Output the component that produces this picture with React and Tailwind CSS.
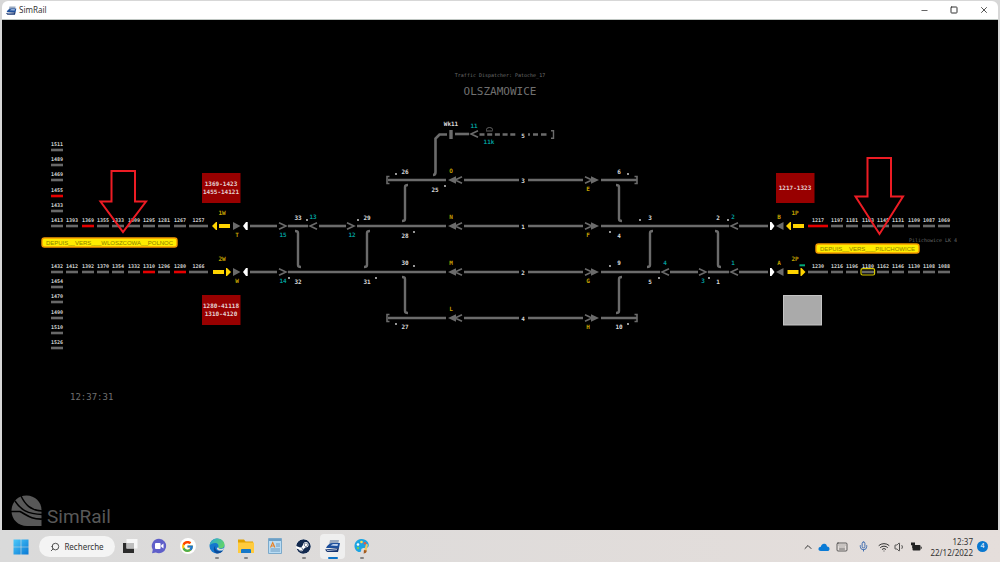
import { FcGoogle } from 'react-icons/fc'
import { FaSteam } from 'react-icons/fa'
import { ChevronUp, Keyboard, Mic, Minus, Search, Square, Volume1, Wifi, X } from 'lucide-react'

const ROWS = { side3: 180, main1: 226, main2: 272, side4: 318 }

// block sections leading out of the station: [label, x, y, width, occupied]
const BLOCKS = [
  ['1511', 51, 150], ['1489', 51, 165], ['1469', 51, 180], ['1455', 51, 196, 12, true], ['1433', 51, 211],
  ['1413', 51, 226], ['1393', 66, 226], ['1369', 82, 226, 12, true], ['1355', 97, 226], ['1333', 112, 226],
  ['1309', 128, 226], ['1295', 143, 226], ['1281', 158, 226], ['1267', 174, 226], ['1257', 189, 226, 19],
  ['1432', 51, 272], ['1412', 66, 272], ['1392', 82, 272], ['1370', 97, 272], ['1354', 112, 272],
  ['1332', 128, 272], ['1310', 143, 272, 12, true], ['1296', 158, 272], ['1280', 174, 272, 12, true], ['1266', 189, 272, 19],
  ['1454', 51, 287], ['1470', 51, 302], ['1490', 51, 318], ['1510', 51, 333], ['1526', 51, 348],
  ['1217', 808, 226, 20, true], ['1197', 831, 226], ['1181', 846, 226], ['1163', 862, 226], ['1145', 877, 226],
  ['1131', 892, 226], ['1109', 908, 226], ['1087', 923, 226], ['1069', 938, 226],
  ['1230', 808, 272, 20], ['1216', 831, 272], ['1196', 846, 272], ['1180', 862, 272], ['1162', 877, 272],
  ['1146', 892, 272], ['1130', 908, 272], ['1108', 923, 272], ['1088', 938, 272],
]

// [x1, x2, y]
const TRACKS = [
  [388, 446, 180], [464, 519, 180], [528, 583, 180], [601, 637, 180],
  [250, 277, 226], [288, 308, 226], [319, 346, 226], [357, 446, 226], [464, 519, 226], [528, 583, 226], [601, 729, 226], [739, 768, 226],
  [250, 277, 272], [288, 446, 272], [464, 519, 272], [528, 583, 272], [601, 660, 272], [670, 698, 272], [708, 729, 272], [739, 768, 272],
  [388, 446, 318], [464, 519, 318], [528, 583, 318], [601, 637, 318],
  [455, 469, 134],
]

// crossovers: [x, top, bottom, side of the top foot]
const CROSSOVERS = [
  [298, 231, 267, -1], [367, 231, 267, 1], [405, 185, 221, 1], [405, 277, 313, -1],
  [619, 185, 221, -1], [619, 277, 313, 1], [650, 231, 267, 1], [718, 231, 267, -1],
]

const POINTS = [
  ['26', 405, 174], ['25', 435, 192], ['33', 298, 220], ['29', 367, 220], ['28', 405, 238], ['30', 405, 265],
  ['32', 298, 284], ['31', 367, 284], ['27', 405, 329], ['6', 619, 174], ['3', 650, 220], ['2', 718, 220],
  ['4', 619, 238], ['9', 619, 265], ['5', 650, 284], ['1', 718, 284], ['10', 619, 329], ['Wk11', 451, 126],
  ['3', 523, 183], ['1', 523, 229], ['2', 523, 275], ['4', 523, 321], ['5', 523, 138],
]

const SHUNT = [
  ['11', 474, 128], ['11k', 489, 144], ['13', 313, 219], ['15', 283, 237], ['12', 352, 237], ['14', 283, 283],
  ['2', 733, 219], ['4', 665, 265], ['1', 733, 265], ['3', 703, 283],
]

const SIGNALS = [
  ['1W', 222, 215], ['T', 237, 237], ['2W', 222, 261], ['W', 237, 283], ['O', 451, 173], ['N', 451, 219],
  ['M', 451, 265], ['L', 451, 311], ['E', 588, 191], ['F', 588, 237], ['G', 588, 283], ['H', 588, 329],
  ['B', 779, 219], ['1P', 795, 215], ['A', 779, 265], ['2P', 795, 261],
]

const DOTS = [
  [396, 174], [445, 186], [307, 220], [358, 220], [414, 232], [414, 266], [289, 278], [376, 278], [396, 324],
  [628, 174], [640, 220], [728, 220], [610, 232], [610, 266], [659, 278], [709, 278], [628, 324],
]

const CHEVRONS = [
  ['>', 279, 226], ['<', 310, 226], ['>', 347, 226], ['>', 279, 272], ['<', 731, 226], ['<', 662, 272],
  ['>', 699, 272], ['<', 731, 272], ['<', 471, 134],
]

function Label({ x, y, className, children }) {
  return <text x={x} y={y} textAnchor="middle" className={className}>{children}</text>
}

function Chevron({ dir, x, y }) {
  const d = dir === '>' ? `M${x} ${y - 3.3}L${x + 7} ${y}L${x} ${y + 3.3}` : `M${x + 7} ${y - 3.3}L${x} ${y}L${x + 7} ${y + 3.3}`
  return <path d={d} fill="none" stroke="#6b6b6b" strokeWidth="1.6" />
}

function TrainBox({ x, y, lines }) {
  const first = lines.length === 2 ? y + 13 : y + 17
  return (
    <g>
      <rect x={x} y={y} width="38.5" height="30" fill="#980000" />
      {lines.map((line, i) => (
        <Label key={line} x={x + 19} y={first + i * 8} className="fill-[#e4d2d2] text-[6px]">{line}</Label>
      ))}
    </g>
  )
}

function Plate({ x, y, width, children }) {
  return (
    <g>
      <rect x={x} y={y} width={width} height="9" rx="2.5" fill="#ffec00" stroke="#f59a00" strokeWidth="1.4" />
      <Label x={x + width / 2} y={y + 7} className="fill-[#8c8200] font-['Liberation_Sans',sans-serif] text-[6px] font-normal">{children}</Label>
    </g>
  )
}

function LineArrow({ x, y, dir }) {
  return dir === 'left' ? (
    <path d={`M${x} ${y}l4 -4h1v8h-1zM${x + 7} ${y - 2}h11v4h-11z`} fill="#ffd400" />
  ) : (
    <path d={`M${x} ${y - 2}h11v4h-11zM${x + 13} ${y - 4}h1l4 4l-4 4h-1z`} fill="#ffd400" />
  )
}

function Board() {
  return (
    <svg
      viewBox="2 20 996 510"
      role="img"
      aria-label="Olszamowice"
      className="absolute inset-0 h-full w-full font-['DejaVu_Sans_Mono',monospace] font-bold"
    >
      {BLOCKS.map(([label, x, y, width = 12, busy]) => (
        <g key={label}>
          <rect x={x} y={y - 1.3} width={width} height="2.6" fill={busy ? '#e60000' : '#686868'} />
          <Label x={x + width / 2} y={y - 4} className="fill-[#d0d0d0] text-[5px]">{label}</Label>
        </g>
      ))}

      <g stroke="#6b6b6b" strokeWidth="2.6" fill="none">
        {TRACKS.map(([x1, x2, y]) => <path key={`${x1}-${y}`} d={`M${x1} ${y}H${x2}`} />)}
        {CROSSOVERS.map(([x, top, bottom, side]) => (
          <path key={`${x}-${top}`} d={`M${x + side * 3} ${top}q${-side * 3} 0 ${-side * 3} 2V${bottom - 2}q0 2 ${-side * 3} 2`} strokeWidth="2.4" />
        ))}
        <path d="M433 175q2.5 0 2.5 -3V138.500l4 -4H447" />
        <path d="M451 130V139" strokeWidth="3.4" />
        <path d="M479.500 134.500H518" strokeDasharray="5 2.7" />
        <path d="M528 134.500h2M533 134.500h5M541 134.500h5.500" />
        <path d="M551 130.700h2.500v7.500H551" strokeWidth="1.4" />
        <path d="M486 131h6.500M486.500 130.500v-1q0 -2 3 -2t3 2v1" strokeWidth="0.9" />
        {[ROWS.side3, ROWS.side4].map(y => (
          <path key={y} d={`M389.500 ${y - 3.5}h-2.500v7h2.500M634.500 ${y - 3.5}h2.500v7h-2.500`} strokeWidth="1.6" />
        ))}
      </g>

      {CHEVRONS.map(([dir, x, y]) => <Chevron key={`${x}-${y}`} dir={dir} x={x} y={y} />)}
      {Object.values(ROWS).map(y => (
        <g key={y}>
          <path d={`M448 ${y}l8 -3.700v7.400zM599 ${y}l-8 -3.700v7.400z`} fill="#6b6b6b" />
          <Chevron dir="<" x={455} y={y} />
          <Chevron dir=">" x={585} y={y} />
        </g>
      ))}
      {[ROWS.main1, ROWS.main2].map(y => (
        <g key={y}>
          <path d={`M240.500 ${y}l-7.500 -4v8zM776 ${y}l7.500 -4v8z`} fill="#6b6b6b" />
          <path d={`M243 ${y}l3 -4h1.700v8h-1.700zM774.500 ${y}l-3 -4h-1.500v8h1.500z`} fill="#fff" />
        </g>
      ))}

      <LineArrow x={212} y={226} dir="left" />
      <LineArrow x={213} y={272} dir="right" />
      <LineArrow x={786} y={226} dir="left" />
      <LineArrow x={787.5} y={272} dir="right" />
      <rect x="799.500" y="264.300" width="5.500" height="2" fill="#00a878" />
      <rect x="861" y="268.600" width="13.600" height="6.400" rx="1.500" fill="none" stroke="#d5c800" strokeWidth="1.200" />

      {DOTS.map(([x, y]) => <circle key={`${x}-${y}`} cx={x} cy={y} r="0.9" fill="#ddd" />)}
      {POINTS.map(([t, x, y]) => <Label key={`${x}-${y}`} x={x} y={y} className="fill-[#dadada] text-[6px]">{t}</Label>)}
      {SHUNT.map(([t, x, y]) => <Label key={`${x}-${y}`} x={x} y={y} className="fill-[#009c9c] text-[6px]">{t}</Label>)}
      {SIGNALS.map(([t, x, y]) => <Label key={`${x}-${y}`} x={x} y={y} className="fill-[#c4a000] text-[6px]">{t}</Label>)}

      <TrainBox x={202} y={173} lines={['1369-1423', '1455-14121']} />
      <TrainBox x={202} y={295} lines={['1280-41118', '1310-4120']} />
      <TrainBox x={776} y={173} lines={['1217-1323']} />
      <rect x="783.500" y="295.500" width="38" height="29.500" fill="#aaa" stroke="#c4c4c4" />

      <Label x={933} y={242} className="fill-[#6a6a6a] text-[5px] font-normal">Pilichowice LK 4</Label>
      <Plate x={42} y={238} width={135}>DEPUIS__VERS___WLOSZCOWA__POLNOC</Plate>
      <Plate x={816} y={244} width={103}>DEPUIS__VERS___PILICHOWICE</Plate>

      <g fill="none" stroke="#ed1c24" strokeWidth="2">
        <path d="M111.500 171H135V201.500H146L123 232L100.500 201.500H111.500Z" />
        <path d="M867.500 158H891V196.500H903L879.500 234L855.500 196.500H867.500Z" />
      </g>
    </svg>
  )
}

function TrainIcon({ className }) {
  return (
    <svg viewBox="0 0 16 16" className={className}>
      <path d="M5 2h9l-1 5H4z" fill="#9aa9bf" />
      <path d="M1 10c1-3 4-5 7-5h7l-1 5z" fill="#1d4f9c" />
      <path d="M5.500 7.500L8 6h5l-.5 2z" fill="#bcd0ee" />
      <path d="M0 11.500l14-1.500-1 4H2z" fill="#16336e" />
      <path d="M2 12.600l10-1" stroke="#d6e2f5" strokeWidth=".8" />
    </svg>
  )
}

function WindowsIcon() {
  return (
    <svg viewBox="0 0 16 16" className="size-4">
      <defs>
        <linearGradient id="win" x1="0" y1="0" x2="1" y2="1">
          <stop offset="0" stopColor="#4cc9fa" /><stop offset="1" stopColor="#0878d4" />
        </linearGradient>
      </defs>
      <path d="M.5.5h7.200v7.200H.5zM8.300.5h7.200v7.200H8.300zM.5 8.300h7.200v7.200H.5zM8.300 8.300h7.200v7.200H8.300z" fill="url(#win)" />
    </svg>
  )
}

function TaskViewIcon() {
  return (
    <svg viewBox="0 0 16 16" className="size-4">
      <path d="M1 5h11v10H1z" fill="#2b2b2b" />
      <path d="M4.500 1H15.500v9.500H4.500z" fill="#f7f7f7" />
      <path d="M4.500 5H12v5.500H4.500z" fill="#bdbdbd" />
    </svg>
  )
}

function ChatIcon() {
  return (
    <svg viewBox="0 0 16 16" className="size-4">
      <path d="M8 .8a7.200 7.200 0 1 1-3.200 13.700L1 15.300l.8-3.600A7.200 7.200 0 0 1 8 .8z" fill="#5f5fc9" />
      <rect x="4" y="5" width="5.600" height="6" rx="1" fill="#fff" />
      <path d="M10.200 7.300L12.500 5.600v4.800l-2.300-1.700z" fill="#fff" />
    </svg>
  )
}

function EdgeIcon() {
  return (
    <svg viewBox="0 0 16 16" className="size-4">
      <defs>
        <linearGradient id="edgeTop" x1="0" y1="0" x2="1" y2=".5">
          <stop offset="0" stopColor="#2aa7dd" /><stop offset="1" stopColor="#5fd36b" />
        </linearGradient>
      </defs>
      <circle cx="8" cy="8" r="7.500" fill="#1478cf" />
      <path d="M.6 7.500C1 3.500 4.200.5 8 .5c4.500 0 7.500 3 7.500 6.300 0 2.400-1.800 3.700-3.900 3.700-1.700 0-2.500-.6-2.300-1.200.8-2.500-.8-4.300-3.100-4.300C3.500 5 1.500 6 .6 7.500z" fill="url(#edgeTop)" />
      <path d="M6.500 7.500c-1.300 2.500.5 5.700 4 5.700 1.500 0 2.600-.4 3.600-1C12.800 14.500 10.500 15.500 8 15.500c-3.300-.8-4.300-5.500-1.500-8z" fill="#0c4a99" />
      <path d="M9.500 9.200c-.6.700.4 1.700 2.500 1.700 1.400 0 2.500-.6 3-1.300l-.5 2.100c-2.500 1.700-6.500 1-6.700-1.700z" fill="#e1dfde" />
    </svg>
  )
}

function FolderIcon() {
  return (
    <svg viewBox="0 0 16 16" className="size-4">
      <path d="M0 1.500h6l1.500 2H15v4H0z" fill="#e0a100" />
      <path d="M0 4.500h16v10.500H0z" fill="#ffcb3d" />
      <path d="M3 15v-3q0-1 1-1h8q1 0 1 1v3z" fill="#1678c9" />
    </svg>
  )
}

function WordpadIcon() {
  return (
    <svg viewBox="0 0 16 16" className="size-4">
      <path d="M1.500.5h13v15h-13z" fill="#b9dcf4" stroke="#7ba9ca" />
      <path d="M2 1h12v2H2z" fill="#6c9fc6" />
      <path d="M3.500 9.500L5.700 4.500l2.200 5M4.300 8h2.800" fill="none" stroke="#e98125" strokeWidth="1.100" />
      <path d="M9 6h4M9 8h4M3.500 11h9.500M3.500 13h9.500" stroke="#5788b2" strokeWidth=".8" />
    </svg>
  )
}

function PaintIcon() {
  return (
    <svg viewBox="0 0 16 16" className="size-4">
      <path d="M7 1C3 1.500.3 4.500.5 8.300.7 12 3.500 14.500 6 14c2-.4.500-2.700 2-3.500 2-1 5 .5 6.500-2C16 5 12 .5 7 1z" fill="#1da4e2" />
      <circle cx="4" cy="6.500" r="1.300" fill="#fff" /><circle cx="7.500" cy="4" r="1.300" fill="#ffdc4a" />
      <circle cx="11" cy="5.300" r="1.300" fill="#e75b43" /><circle cx="4" cy="10" r="1.200" fill="#6bcf62" />
      <path d="M12 6l2 .5-1.500 6.500-2.500-.3z" fill="#f3c65f" />
      <path d="M10 12l2.800.5c0 2-1.300 3-3.300 3 .7-1 0-2 .5-3.500z" fill="#a35b1f" />
    </svg>
  )
}

function SimRailLogo() {
  return (
    <svg viewBox="0 0 32 32" className="size-8" aria-hidden="true">
      <path d="M15.500.5C24 .5 30.500 7 30.500 15V31H16C7 31 .5 24.500 .5 15.800 .5 7 7 .5 15.500.5z" fill="#585858" />
      <g fill="none" stroke="#000">
        <path d="M10 1c4 8 9 14.500 21.500 15" strokeWidth="1.500" />
        <path d="M4 6c6 9 12 13 27.500 13.500" strokeWidth="1.500" />
        <path d="M0 16.500H9C16 20 20 24.500 31.500 24" strokeWidth="1.700" />
      </g>
    </svg>
  )
}

const APPS = [
  { name: 'Vue des tâches', icon: <TaskViewIcon /> },
  { name: 'Conversation', icon: <ChatIcon /> },
  { name: 'Google', icon: <span className="flex size-4 items-center justify-center rounded-full bg-white"><FcGoogle size={13} /></span> },
  { name: 'Edge', icon: <EdgeIcon />, open: true },
  { name: 'Explorateur', icon: <FolderIcon />, open: true },
  { name: 'WordPad', icon: <WordpadIcon /> },
  { name: 'Steam', icon: <FaSteam size={15} color="#12294e" className="rounded-full bg-white" />, open: true },
  { name: 'SimRail', icon: <TrainIcon className="size-4" />, open: true, active: true },
  { name: 'Paint', icon: <PaintIcon />, open: true },
]

function TaskButton({ app }) {
  return (
    <button
      aria-label={app.name}
      className={`flex h-[25px] w-[25px] flex-col items-center justify-end gap-[3px] rounded-sm ${app.active ? 'bg-[#efefef]' : ''}`}
    >
      {app.icon}
      <span className={`h-[2px] rounded-full ${app.active ? 'w-[10px] bg-[#0a72c8]' : app.open ? 'w-1 bg-[#858585]' : 'w-1'}`} />
    </button>
  )
}

function Taskbar() {
  return (
    <footer className="flex h-8 items-center bg-linear-to-r from-[#dadada] to-[#e5dedb] pt-px pr-3 pl-[13px] text-[8px] text-[#333]">
      <button aria-label="Démarrer"><WindowsIcon /></button>
      <button className="mr-[2px] ml-[10px] flex h-[21px] w-[76px] items-center justify-center gap-1 rounded-full bg-[#f4f4f4]">
        <Search size={10} strokeWidth={2} className="-scale-x-100" />
        Recherche
      </button>
      <nav className="flex gap-1">
        {APPS.map(app => <TaskButton key={app.name} app={app} />)}
      </nav>

      <div className="ml-auto flex items-center">
        <ChevronUp size={12} strokeWidth={2} />
        <svg viewBox="0 0 12 12" className="ml-1 size-3">
          <path d="M3 10C.8 10 .3 8.800.5 7.700.7 6.500 1.700 5.800 2.800 5.800 3.300 3.500 5 2.500 6.500 2.800 8 3 8.800 4 9 5.500c1.700 0 2.600 1 2.500 2.400C11.400 9.200 10.600 10 9.500 10z" fill="#0a7bd6" />
        </svg>
        <Keyboard size={12} strokeWidth={1.5} className="ml-[6px]" />
        <Mic size={11} strokeWidth={2} className="ml-[10px] text-[#3365ad]" />
        <Wifi size={12} strokeWidth={2} className="ml-[9px]" />
        <Volume1 size={12} strokeWidth={1.700} className="ml-1" />
        <svg viewBox="0 0 12 12" className="ml-1 size-3">
          <rect x="2.500" y="4" width="8" height="5.500" rx="1" fill="#222" />
          <path d="M10.800 5.700h.9v2h-.9zM1 1.500h4v2.700H3.700V7H2.300V4.200H1z" fill="#222" />
        </svg>
        <div className="ml-2 text-right leading-[11px]">
          <p>12:37</p>
          <p>22/12/2022</p>
        </div>
        <span className="ml-1 flex size-[11px] items-center justify-center rounded-full bg-[#0a78d0] text-[7px] text-white">4</span>
      </div>
    </footer>
  )
}

export default function App() {
  return (
    <div className="flex h-screen flex-col bg-[#d7d7d7] font-['Noto_Sans',sans-serif]">
      <div className="mx-[2px] mt-px flex min-h-0 flex-1 flex-col">
        <header className="flex h-[19px] shrink-0 items-center gap-[2px] rounded-t-md border-b border-[#bfc6c2] bg-white pr-[9px] pl-1 text-[8px] text-[#333]">
          <TrainIcon className="size-[11px]" />
          <span>SimRail</span>
          <div className="ml-auto flex items-center gap-[21px] text-[#333]">
            <button aria-label="Réduire"><Minus size={9} strokeWidth={2} /></button>
            <button aria-label="Agrandir"><Square size={8} strokeWidth={3} /></button>
            <button aria-label="Fermer"><X size={10} strokeWidth={2} /></button>
          </div>
        </header>

        <main className="relative flex min-h-0 flex-1 flex-col bg-black font-['DejaVu_Sans_Mono',monospace] text-[#707070]">
          <Board />
          <div className="relative pt-[51px] text-center">
            <p className="text-[5px] leading-[8px]">Traffic Dispatcher: Patoche_17</p>
            <h1 className="mt-[6px] text-[11px] leading-[14px]">OLSZAMOWICE</h1>
          </div>
          <div className="relative mt-auto flex flex-col gap-[90px] pb-[3px]">
            <time className="pl-[68px] text-[9px] leading-[16px]">12:37:31</time>
            <div className="flex items-end gap-1 pl-[9px] text-[#585858]">
              <SimRailLogo />
              <span className="font-['Roboto',sans-serif] text-[19px] leading-[20px]">SimRail</span>
            </div>
          </div>
        </main>
      </div>
      <Taskbar />
    </div>
  )
}
